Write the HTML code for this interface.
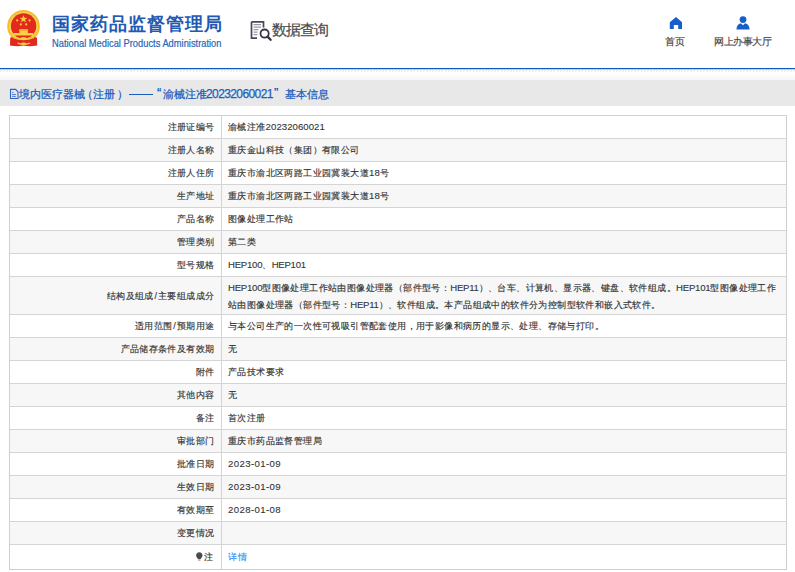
<!DOCTYPE html>
<html><head><meta charset="utf-8">
<style>
*{margin:0;padding:0;box-sizing:border-box}
html,body{width:795px;height:572px;overflow:hidden;background:#fff;font-family:"Liberation Sans",sans-serif;}
.abs{position:absolute}
#title{left:52px;top:12px;font-size:18px;font-weight:bold;color:#2259b2;white-space:nowrap;line-height:24px;letter-spacing:1.05px}
#en{left:52px;top:37px;font-size:10.5px;color:#2a64b4;-webkit-text-stroke:0.2px #2a64b4;white-space:nowrap;line-height:12px;transform:scaleX(0.888);transform-origin:0 0}
#sq{left:272px;top:19px;font-size:15px;letter-spacing:-0.9px;color:#4a4a4a;-webkit-text-stroke:0.2px #4a4a4a;line-height:22px;white-space:nowrap}
.nav{font-size:9.55px;letter-spacing:-0.5px;color:#444;-webkit-text-stroke:0.15px #444;line-height:12px;white-space:nowrap}
#line{left:0;top:68px;width:795px;height:1px;background:#0d5fc0;box-shadow:0 1px 0 rgba(60,130,210,0.35)}
#hatch{left:0;top:70px;width:795px;height:2px;background:repeating-linear-gradient(135deg,#fff 0 0.8px,#e2e2e2 0.8px 1.5px,#fff 1.5px 2.2px)}
#grad{left:0;top:73px;width:795px;height:7px;background:linear-gradient(#fff,#f6f6f6)}
#bar{left:0;top:80px;width:795px;height:26px;background:#e8e8e8}
.bt{top:85.5px;font-size:11px;color:#1a5dc0;-webkit-text-stroke:0.25px #1a5dc0;line-height:17px;white-space:nowrap}
.dg{font-size:12px;letter-spacing:-0.6px}
table{position:absolute;left:9px;top:115px;width:778px;table-layout:fixed;border-collapse:separate;border-spacing:0;border:1px solid #cfcfcf;font-size:9px;letter-spacing:0.4px;color:#333;-webkit-text-stroke:0.15px #333}
td{border-bottom:1px solid #d4d4d4;height:23px;padding:1px 6px 0 6px;line-height:17px;white-space:nowrap}
td.l{width:212px;text-align:right;border-right:1px solid #d4d4d4;padding-right:6.5px}
tr.tall td{height:38px;padding-top:2px}
tr:last-child td{border-bottom:0;height:24px}
tr:nth-child(even) td{background:#f7f7f7}
.n{font-size:9.6px;line-height:0;letter-spacing:0.05px;-webkit-text-stroke:0.1px #333}
.d{letter-spacing:0.4px}
.h{letter-spacing:-0.25px}
.sl{margin:0 0.7px}
.pin{display:inline-block;margin-right:1px;vertical-align:-1px}
a{color:#2f8af4;-webkit-text-stroke:0.15px #2f8af4;letter-spacing:1.2px;text-decoration:none}
</style></head><body>
<!-- emblem -->
<svg class="abs" style="left:0;top:5px" width="48" height="48" viewBox="0 5 48 48">
  <circle cx="23.5" cy="26.2" r="16.3" fill="#f2bd2e"/>
  <circle cx="23.5" cy="26.2" r="14.5" fill="#f7d04a"/>
  <circle cx="23.6" cy="26.0" r="12.7" fill="#e3291d"/>
  <polygon points="23.5,15.2 24.5,17.8 27.3,17.9 25.1,19.6 25.9,22.3 23.5,20.7 21.1,22.3 21.9,19.6 19.7,17.9 22.5,17.8" fill="#f8d33e"/>
  <circle cx="17.2" cy="20.4" r="1.05" fill="#f8d33e"/>
  <circle cx="29.6" cy="20.4" r="1.05" fill="#f8d33e"/>
  <circle cx="20.8" cy="24.4" r="1.05" fill="#f8d33e"/>
  <circle cx="26.2" cy="24.4" r="1.05" fill="#f8d33e"/>
  <path d="M18.7 30.8 L19.6 29.3 H27.7 L28.6 30.8Z" fill="#f8d33e"/>
  <rect x="19.5" y="30.8" width="8.3" height="2.3" fill="#f6cf46"/>
  <rect x="13.5" y="33" width="19.6" height="2.5" fill="#f8d33e"/>
  <path d="M10.2 37.6 Q13 36.5 16 38 Q23.5 41 31 38 Q34 36.5 37 37.6 L37.2 45.5 Q30 47 23.5 45.6 Q17 47 10 45.5Z" fill="#e02a20"/>
  <path d="M13 37.2 Q23.5 41.6 34 37.2" stroke="#f4c53a" stroke-width="1.8" fill="none"/>
  <ellipse cx="23.5" cy="38.6" rx="3.2" ry="1.5" fill="#f6cf46"/>
  <path d="M17.6 43.2 Q23.5 45.6 30 43.2" stroke="#f4c53a" stroke-width="1.4" fill="none"/>
  <ellipse cx="23.5" cy="43.6" rx="2.6" ry="1.2" fill="#f6cf46"/>
</svg>
<div id="title" class="abs">国家药品监督管理局</div>
<div id="en" class="abs">National Medical Products Administration</div>
<!-- data query icon -->
<svg class="abs" style="left:248px;top:19px" width="26" height="24" viewBox="248 19 26 24">
  <path d="M251.5 21.8 H263.5 V27.5 M251.5 21.8 V38.2 H257" stroke="#474756" stroke-width="1.7" fill="none"/>
  <path d="M253.5 24.6 H261 M253.5 27.1 H261 M253.5 29.6 H258.5 M253.5 32.1 H257.5 M253.5 34.6 H257.5" stroke="#9a9aa6" stroke-width="1.3"/>
  <circle cx="264.6" cy="33.6" r="4.1" stroke="#353545" stroke-width="1.8" fill="none"/>
  <path d="M267.6 36.6 L270.6 39.8" stroke="#353545" stroke-width="2.3" stroke-linecap="round"/>
</svg>
<div id="sq" class="abs">数据查询</div>
<!-- nav -->
<svg class="abs" style="left:668px;top:15px" width="16" height="16" viewBox="668 15 16 16">
  <path d="M676 17 L682 22.2 V28.9 H678.2 V25 H673.8 V28.9 H669.8 V22.2Z" fill="#1460c8"/>
</svg>
<div class="abs nav" style="left:665px;top:36px">首页</div>
<svg class="abs" style="left:734px;top:14px" width="18" height="18" viewBox="734 14 18 18">
  <circle cx="743" cy="19.6" r="3.4" fill="#1460c8"/>
  <path d="M736.4 29.4 Q736.8 24 740.8 23.2 L743 25.3 L745.2 23.2 Q749.2 24 749.6 29.4Z" fill="#1460c8"/>
</svg>
<div class="abs nav" style="left:714px;top:36px">网上办事大厅</div>

<div id="line" class="abs"></div>
<div id="hatch" class="abs"></div>
<div id="grad" class="abs"></div>
<div id="bar" class="abs"></div>
<svg class="abs" style="left:9px;top:88px" width="11" height="12" viewBox="9 88 11 12">
  <path d="M10.5 89.4 H15.6 L18 91.8 V98.5 H10.5Z" stroke="#2a62c8" stroke-width="1.1" fill="none"/>
  <path d="M12.1 92.4 H13.6 M12.1 94.5 H15.9 M12.1 96.4 H15.9" stroke="#3a6ad0" stroke-width="0.9"/>
</svg>
<div class="abs bt" style="left:19px">境内医疗器械</div>
<div class="abs bt" style="left:81.5px">（</div>
<div class="abs bt" style="left:93px">注册</div>
<div class="abs bt" style="left:117px">）</div>
<div class="abs bt" style="left:129px;top:93.5px;width:24px;height:1.5px;background:#1a5dc0"></div>
<div class="abs bt" style="left:157px;font-size:13px;top:84px">“</div>
<div class="abs bt" style="left:163px">渝械注准</div>
<div class="abs bt dg" style="left:206px">20232060021</div>
<div class="abs bt" style="left:274px;font-size:13px;top:84px">”</div>
<div class="abs bt" style="left:285px">基本信息</div>

<table>
<tr><td class="l">注册证编号</td><td>渝械注准<span class="n">20232060021</span></td></tr>
<tr><td class="l">注册人名称</td><td>重庆金山科技（集团）有限公司</td></tr>
<tr><td class="l">注册人住所</td><td>重庆市渝北区两路工业园冀装大道<span class="n">18</span>号</td></tr>
<tr><td class="l">生产地址</td><td>重庆市渝北区两路工业园冀装大道<span class="n">18</span>号</td></tr>
<tr><td class="l">产品名称</td><td>图像处理工作站</td></tr>
<tr><td class="l">管理类别</td><td>第二类</td></tr>
<tr><td class="l">型号规格</td><td><span class="n h">HEP100</span>、<span class="n h">HEP101</span></td></tr>
<tr class="tall"><td class="l">结构及组成<span class="sl">/</span>主要组成成分</td><td><span class="n h">HEP100</span>型图像处理工作站由图像处理器（部件型号：<span class="n h">HEP11</span>）、台车、计算机、显示器、键盘、软件组成。<span class="n h">HEP101</span>型图像处理工作<br>站由图像处理器（部件型号：<span class="n h">HEP11</span>）、软件组成。本产品组成中的软件分为控制型软件和嵌入式软件。</td></tr>
<tr><td class="l">适用范围<span class="sl">/</span>预期用途</td><td>与本公司生产的一次性可视吸引管配套使用，用于影像和病历的显示、处理、存储与打印。</td></tr>
<tr><td class="l">产品储存条件及有效期</td><td>无</td></tr>
<tr><td class="l">附件</td><td>产品技术要求</td></tr>
<tr><td class="l">其他内容</td><td>无</td></tr>
<tr><td class="l">备注</td><td>首次注册</td></tr>
<tr><td class="l">审批部门</td><td>重庆市药品监督管理局</td></tr>
<tr><td class="l">批准日期</td><td><span class="n d">2023-01-09</span></td></tr>
<tr><td class="l">生效日期</td><td><span class="n d">2023-01-09</span></td></tr>
<tr><td class="l">有效期至</td><td><span class="n d">2028-01-08</span></td></tr>
<tr><td class="l">变更情况</td><td></td></tr>
<tr><td class="l" style="padding-right:8px"><svg class="pin" width="7" height="9" viewBox="0 0 7 9"><path d="M3.3 0.3 C5.2 0.3 6.5 1.7 6.5 3.4 C6.5 4.8 5.3 5.6 4.6 7 H2 C1.3 5.6 0.1 4.8 0.1 3.4 C0.1 1.7 1.4 0.3 3.3 0.3Z" fill="#4a4a4a"/><rect x="2.1" y="7.3" width="2.4" height="1.4" fill="#9a9a9a"/></svg>注</td><td><a>详情</a></td></tr>
</table>
</body></html>
